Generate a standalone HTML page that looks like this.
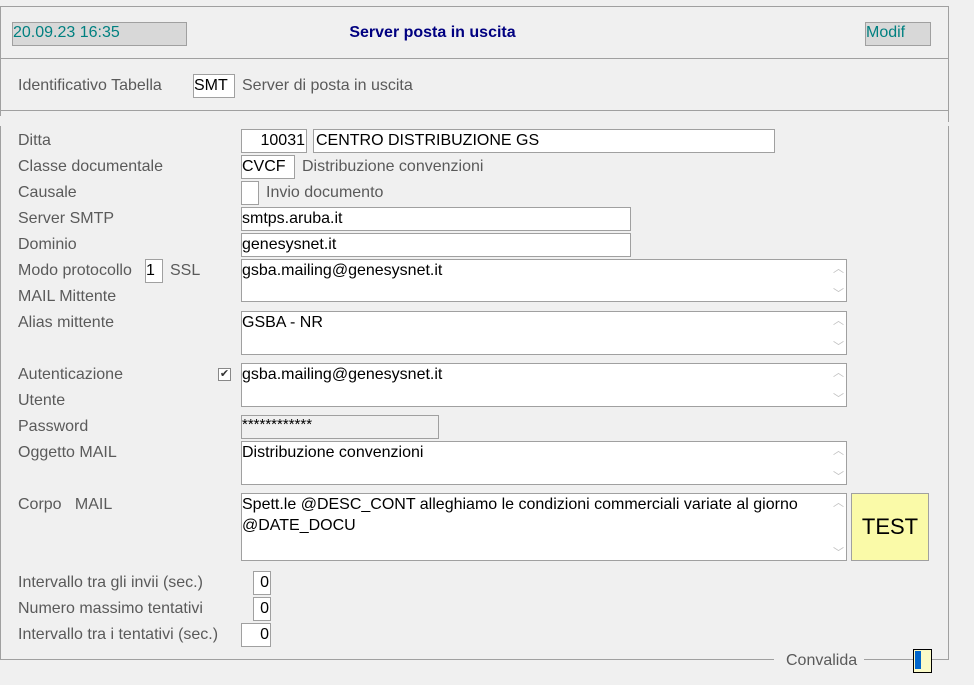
<!DOCTYPE html><html><head><style>
body{margin:0;width:974px;height:685px;background:#f0f0f0;position:relative;overflow:hidden;font-family:"Liberation Sans",sans-serif;font-size:16px}
div{position:absolute;box-sizing:border-box}
.l{color:#5a5a5a;left:18px;line-height:23px}
.b{background:#fff;border:1px solid #a0a0a0;color:#000;line-height:22px;padding-left:0px;white-space:nowrap;overflow:hidden}
.t{color:#5a5a5a;line-height:23px}
.hl{height:1px;background:#a0a0a0}
.vl{width:1px;background:#a0a0a0}
.sc{position:absolute;right:2px;color:#c0c0c0;font-size:11px;line-height:10px}
.r{text-align:right;padding-right:1px}
</style></head><body>
<div class="hl" style="left:0;top:6px;width:949px"></div>
<div class="vl" style="left:0;top:6px;height:110px"></div>
<div class="vl" style="left:0;top:126px;height:534px"></div>
<div class="vl" style="left:948px;top:6px;height:116px"></div>
<div class="vl" style="left:948px;top:126px;height:534px"></div>
<div class="hl" style="left:0;top:58px;width:949px"></div>
<div class="hl" style="left:0;top:110px;width:949px"></div>
<div class="hl" style="left:0;top:659px;width:774px"></div>
<div class="hl" style="left:864px;top:659px;width:85px"></div>
<div style="left:12px;top:22px;width:175px;height:24px;background:#d8d8d8;border:1px solid #a0a0a0;color:#008080;line-height:20px">20.09.23 16:35</div>
<div style="left:300px;top:22px;width:265px;text-align:center;color:#000080;font-weight:bold;line-height:22px">Server posta in uscita</div>
<div style="left:865px;top:22px;width:66px;height:24px;background:#d8d8d8;border:1px solid #a0a0a0;color:#008080;line-height:20px">Modif</div>
<div class="l" style="top:74px">Identificativo Tabella</div>
<div class="b" style="left:193px;top:74px;width:42px;height:24px">SMT</div>
<div class="t" style="left:242px;top:74px">Server di posta in uscita</div>
<div class="l" style="top:129px">Ditta</div>
<div class="b r" style="left:241px;top:129px;width:66px;height:24px">10031</div>
<div class="b" style="left:313px;top:129px;width:462px;height:24px;padding-left:2px">CENTRO DISTRIBUZIONE GS</div>
<div class="l" style="top:155px">Classe documentale</div>
<div class="b" style="left:241px;top:155px;width:54px;height:24px">CVCF</div>
<div class="t" style="left:302px;top:155px">Distribuzione convenzioni</div>
<div class="l" style="top:181px">Causale</div>
<div class="b" style="left:241px;top:181px;width:18px;height:24px"></div>
<div class="t" style="left:266px;top:181px">Invio documento</div>
<div class="l" style="top:207px">Server SMTP</div>
<div class="b" style="left:241px;top:207px;width:390px;height:24px">smtps.aruba.it</div>
<div class="l" style="top:233px">Dominio</div>
<div class="b" style="left:241px;top:233px;width:390px;height:24px">genesysnet.it</div>
<div class="l" style="top:259px">Modo protocollo</div>
<div class="b" style="left:145px;top:259px;width:18px;height:24px">1</div>
<div class="t" style="left:170px;top:259px">SSL</div>
<div class="l" style="top:285px">MAIL Mittente</div>
<div class="b" style="left:241px;top:259px;width:606px;height:43px">gsba.mailing@genesysnet.it<span class="sc" style="top:4px">︿</span><span class="sc" style="bottom:2px">﹀</span></div>
<div class="l" style="top:311px">Alias mittente</div>
<div class="b" style="left:241px;top:311px;width:606px;height:44px">GSBA - NR<span class="sc" style="top:4px">︿</span><span class="sc" style="bottom:2px">﹀</span></div>
<div class="l" style="top:363px">Autenticazione</div>
<div style="left:218px;top:368px;width:13px;height:13px;border:1px solid #888;background:#fff;font-size:11px;line-height:11px;text-align:center;color:#333">✔</div>
<div class="l" style="top:389px">Utente</div>
<div class="b" style="left:241px;top:363px;width:606px;height:44px">gsba.mailing@genesysnet.it<span class="sc" style="top:4px">︿</span><span class="sc" style="bottom:2px">﹀</span></div>
<div class="l" style="top:415px">Password</div>
<div class="b" style="left:241px;top:415px;width:198px;height:24px;background:#f0f0f0;line-height:18px;font-size:15px">************</div>
<div class="l" style="top:441px">Oggetto MAIL</div>
<div class="b" style="left:241px;top:441px;width:606px;height:44px">Distribuzione convenzioni<span class="sc" style="top:4px">︿</span><span class="sc" style="bottom:2px">﹀</span></div>
<div class="l" style="top:493px">Corpo&nbsp;&nbsp;&nbsp;MAIL</div>
<div class="b" style="left:241px;top:493px;width:606px;height:68px;white-space:normal;padding-right:30px;line-height:21px">Spett.le @DESC_CONT alleghiamo le condizioni commerciali variate al giorno @DATE_DOCU<span class="sc" style="top:4px">︿</span><span class="sc" style="bottom:2px">﹀</span></div>
<div style="left:851px;top:493px;width:78px;height:68px;background:#fafaa8;border:1px solid #a0a0a0;text-align:center;line-height:66px;font-size:22px">TEST</div>
<div class="l" style="top:571px">Intervallo tra gli invii (sec.)</div>
<div class="b r" style="left:253px;top:571px;width:18px;height:24px">0</div>
<div class="l" style="top:597px">Numero massimo tentativi</div>
<div class="b r" style="left:253px;top:597px;width:18px;height:24px">0</div>
<div class="l" style="top:623px">Intervallo tra i tentativi (sec.)</div>
<div class="b r" style="left:241px;top:623px;width:30px;height:24px">0</div>
<div class="t" style="left:786px;top:649px">Convalida</div>
<div style="left:913px;top:649px;width:19px;height:24px;border:1px solid #000;background:#fafac8"><div style="left:1px;top:1px;width:6px;height:18px;background:#0066cc"></div></div>
</body></html>
